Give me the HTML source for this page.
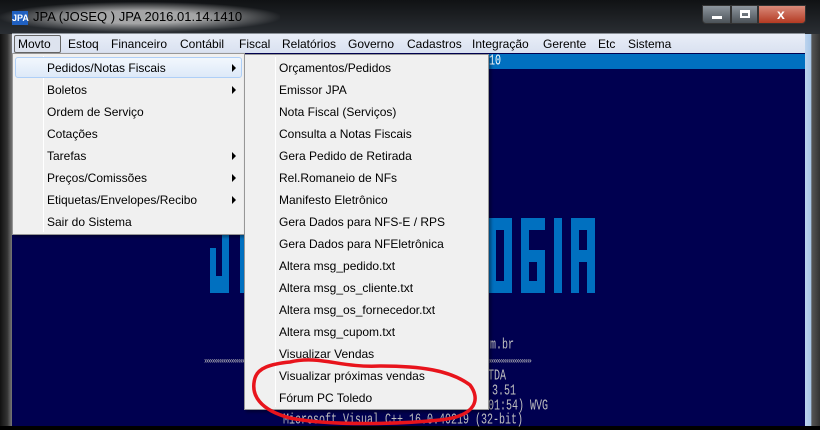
<!DOCTYPE html>
<html><head><meta charset="utf-8"><style>
*{margin:0;padding:0;box-sizing:border-box}
body{width:820px;height:426px;overflow:hidden;background:#000;position:relative;font-family:"Liberation Sans",sans-serif;font-size:12px;color:#000}
.abs{position:absolute}
.title{left:0;top:0;width:820px;height:34px;background:linear-gradient(#101214,#2a2e33)}
.menubar{left:12px;top:33px;width:793px;height:20px;background:linear-gradient(#e9eef8,#d9e1f0);border-top:1px solid #8a9097}
.menubar span{position:absolute;top:3px}
.client{left:12px;top:53px;width:793px;height:373px;background:#000050}
.menu{background:#f0f0f0;border:1px solid #979797;box-shadow:2px 2px 3px rgba(0,0,0,.4)}
.item{position:absolute;left:34px;height:22px;line-height:22px;white-space:nowrap}
.arr{position:absolute;left:219px;width:0;height:0;border-left:4px solid #000;border-top:4px solid transparent;border-bottom:4px solid transparent}
.con{font-family:"Liberation Mono",monospace;color:#c0c0c0;font-size:10px;position:absolute;white-space:nowrap;transform:scaleY(1.5);transform-origin:0 0}
</style></head><body>
<div class="abs title"></div>
<div class="abs" style="left:0px;top:2px;width:280px;height:30px;background:radial-gradient(ellipse at center,rgba(210,210,210,.75) 30%,rgba(0,0,0,0) 72%)"></div>
<div class="abs" style="left:12px;top:11px;width:16px;height:14px;background:#2060c0;color:#fff;font-size:9px;font-weight:bold;line-height:14px;text-align:center">JPA</div>
<div class="abs" style="left:33px;top:9px;font-size:13px;color:#000;">JPA (JOSEQ ) JPA 2016.01.14.1410</div>
<!-- window buttons -->
<div class="abs" style="left:702px;top:5px;width:29px;height:19px;border:1px solid #333;border-radius:0 0 0 4px;background:linear-gradient(#8e969e,#4b5258)"><div class="abs" style="left:9px;top:10px;width:10px;height:3px;background:#fff"></div></div>
<div class="abs" style="left:731px;top:5px;width:27px;height:19px;border:1px solid #333;background:linear-gradient(#8e969e,#4b5258)"><div class="abs" style="left:8px;top:4px;width:10px;height:8px;border:2px solid #fff;border-top-width:3px"></div></div>
<div class="abs" style="left:758px;top:5px;width:48px;height:19px;border:1px solid #333;border-radius:0 0 4px 0;background:linear-gradient(#d98a7a,#b33a22)"><div class="abs" style="left:18px;top:0px;color:#fff;font-weight:bold;font-size:14px">x</div></div>
<div class="abs" style="left:0;top:34px;width:12px;height:392px;background:linear-gradient(90deg,#111,#333 60%,#777)"></div>
<div class="abs" style="left:805px;top:34px;width:15px;height:392px;background:linear-gradient(90deg,#bcd4ee 0,#a8c6e8 40%,#555 45%,#333)"></div>
<div class="abs menubar">
<div class="abs" style="left:2px;top:1px;width:47px;height:18px;border:1px solid #666;border-radius:2px;background:#dde3ee"></div>
<span style="left:6px">Movto</span><span style="left:56px">Estoq</span><span style="left:99px">Financeiro</span><span style="left:168px">Contábil</span><span style="left:227px">Fiscal</span><span style="left:270px">Relatórios</span><span style="left:336px">Governo</span><span style="left:395px">Cadastros</span><span style="left:460px">Integração</span><span style="left:531px">Gerente</span><span style="left:586px">Etc</span><span style="left:616px">Sistema</span>
</div>
<div class="abs client"></div>
<div class="abs" style="left:12px;top:54px;width:793px;height:15px;background:#0070c0"></div>
<div class="con" style="left:489px;top:54px;color:#fff">10</div>
<svg class="abs" style="left:0;top:0" width="820" height="426">
<g fill="#0070c0">
<rect x="222" y="235" width="7" height="58"/><rect x="210" y="276" width="19" height="17"/><rect x="210" y="248" width="6" height="45"/><rect x="240" y="235" width="5" height="58"/>
<rect x="488" y="218" width="24" height="75"/><rect x="521" y="218" width="24" height="75"/><rect x="554" y="218" width="8" height="75"/><rect x="571" y="218" width="24" height="75"/>
</g>
<g fill="#000050">
<rect x="496" y="230" width="8" height="51"/><rect x="529" y="230" width="16" height="20"/><rect x="529" y="262" width="8" height="19"/><rect x="579" y="230" width="8" height="20"/><rect x="579" y="262" width="8" height="31"/>
</g>
</svg>
<div class="con" style="left:490px;top:338px">m.br</div>
<div class="con" style="left:204px;top:357px;font-size:8px;letter-spacing:-1px;transform:none">»»»»»»»»»»»»»»»»»»»»»»»»»»»»»»»»»»»»»»»»»»»»»»»»»»»»»»»»»»»»»»»»»»»»»»»»»»»»»»»»»»»»»»</div>
<div class="con" style="left:488px;top:369px">TDA</div>
<div class="con" style="left:492px;top:384px">3.51</div>
<div class="con" style="left:488px;top:399px">01:54) WVG</div>
<div class="con" style="left:283px;top:413px">Microsoft Visual C++ 16.0.40219 (32-bit)</div>
<!-- main menu -->
<div class="abs menu" style="left:12px;top:53px;width:233px;height:182px">
<div class="abs" style="left:30px;top:2px;width:1px;height:176px;background:#e2e3e3;border-right:1px solid #fff"></div>
<div class="abs" style="left:2px;top:3px;width:227px;height:21px;border:1px solid #aecff7;border-radius:3px;background:linear-gradient(#f2f7fd,#dde9f8)"></div>
<div class="item" style="top:3px">Pedidos/Notas Fiscais</div><div class="arr" style="top:10px"></div>
<div class="item" style="top:25px">Boletos</div><div class="arr" style="top:32px"></div>
<div class="item" style="top:47px">Ordem de Serviço</div>
<div class="item" style="top:69px">Cotações</div>
<div class="item" style="top:91px">Tarefas</div><div class="arr" style="top:98px"></div>
<div class="item" style="top:113px">Preços/Comissões</div><div class="arr" style="top:120px"></div>
<div class="item" style="top:135px">Etiquetas/Envelopes/Recibo</div><div class="arr" style="top:142px"></div>
<div class="item" style="top:157px">Sair do Sistema</div>
</div>
<!-- submenu -->
<div class="abs menu" style="left:244px;top:54px;width:245px;height:356px">
<div class="abs" style="left:30px;top:2px;width:1px;height:350px;background:#e2e3e3;border-right:1px solid #fff"></div>
<div class="item" style="top:2px">Orçamentos/Pedidos</div>
<div class="item" style="top:24px">Emissor JPA</div>
<div class="item" style="top:46px">Nota Fiscal (Serviços)</div>
<div class="item" style="top:68px">Consulta a Notas Fiscais</div>
<div class="item" style="top:90px">Gera Pedido de Retirada</div>
<div class="item" style="top:112px">Rel.Romaneio de NFs</div>
<div class="item" style="top:134px">Manifesto Eletrônico</div>
<div class="item" style="top:156px">Gera Dados para NFS-E / RPS</div>
<div class="item" style="top:178px">Gera Dados para NFEletrônica</div>
<div class="item" style="top:200px">Altera msg_pedido.txt</div>
<div class="item" style="top:222px">Altera msg_os_cliente.txt</div>
<div class="item" style="top:244px">Altera msg_os_fornecedor.txt</div>
<div class="item" style="top:266px">Altera msg_cupom.txt</div>
<div class="item" style="top:288px">Visualizar Vendas</div>
<div class="item" style="top:310px">Visualizar próximas vendas</div>
<div class="item" style="top:332px">Fórum PC Toledo</div>
</div>
<svg class="abs" style="left:0;top:0" width="820" height="426">
<path d="M290 362 C320 355 340 368 380 366 C420 366 450 370 470 385 C480 398 478 416 440 420 C400 424 330 426 290 418 C260 410 250 395 255 378 C258 368 270 364 290 362 Z" fill="none" stroke="#e8141c" stroke-width="3.5"/>
</svg>
</body></html>
